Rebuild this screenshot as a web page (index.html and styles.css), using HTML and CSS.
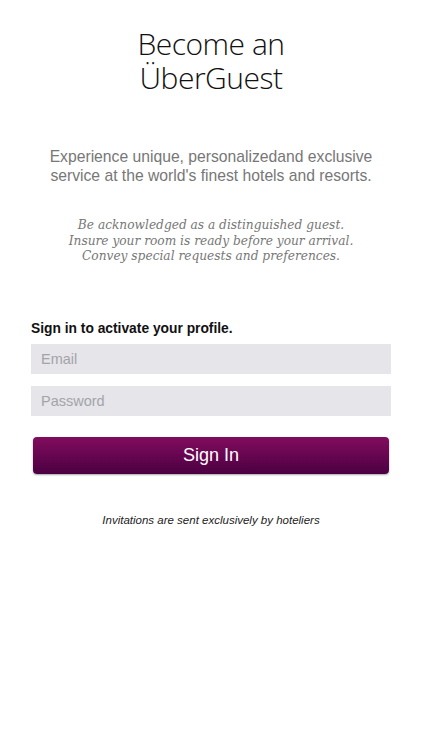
FILE: index.html
```html
<!DOCTYPE html>
<html>
<head>
<meta charset="utf-8">
<link rel="stylesheet" href="styles.css">
</head>
<body>
<div class="page">
  <h1 class="title">Become an<br>ÜberGuest</h1>
  <p class="intro">Experience unique, personalizedand exclusive<br>service at the world's finest hotels and resorts.</p>
  <p class="perks">Be acknowledged as a distinguished guest.<br>Insure your room is ready before your arrival.<br>Convey special requests and preferences.</p>
  <form class="form">
    <div class="label">Sign in to activate your profile.</div>
    <input class="field" type="text" placeholder="Email">
    <input class="field" type="password" placeholder="Password">
    <button class="btn" type="button">Sign In</button>
  </form>
  <p class="note">Invitations are sent exclusively by hoteliers</p>
</div>
</body>
</html>
```
FILE: styles.css
```css
html, body { margin: 0; padding: 0; background: #fff; }
body { font-family: "Liberation Sans", Arial, sans-serif; }
.page { display: flex; flex-direction: column; align-items: center; padding-top: 27px; }
.title { margin: 0; font-weight: 300; font-size: 30px; line-height: 34px; color: #111; text-align: center; font-family: "Open Sans", "Liberation Sans", sans-serif; letter-spacing: -0.5px; }
.intro { margin: 52px 0 0; font-size: 15.7px; line-height: 19px; color: #777; text-align: center; }
.perks { margin: 33px 0 0; font-family: "DejaVu Serif", serif; font-style: italic; font-size: 12.2px; line-height: 15.5px; color: #777; text-align: center; }
.form { width: 360px; margin-top: 56px; display: flex; flex-direction: column; }
.label { font-size: 13.8px; font-weight: bold; color: #111; margin-bottom: 8px; }
.field { box-sizing: border-box; height: 30px; border: 0; background: #e5e5ea; padding: 0 10px; font-family: inherit; font-size: 14.5px; margin: 0 0 12px; outline: none; }
.field::placeholder { color: #a4a4a8; }
.btn { box-sizing: border-box; margin: 9px 2px 0; height: 37px; border: 0; border-radius: 4px; background: linear-gradient(#820c5e, #4b0042); color: #fff; font-family: "Liberation Sans", sans-serif; font-size: 18px; box-shadow: 0 1px 2px rgba(0,0,0,0.35); }
.note { margin: 40px 0 0; font-size: 11.5px; font-style: italic; color: #222; }
```
